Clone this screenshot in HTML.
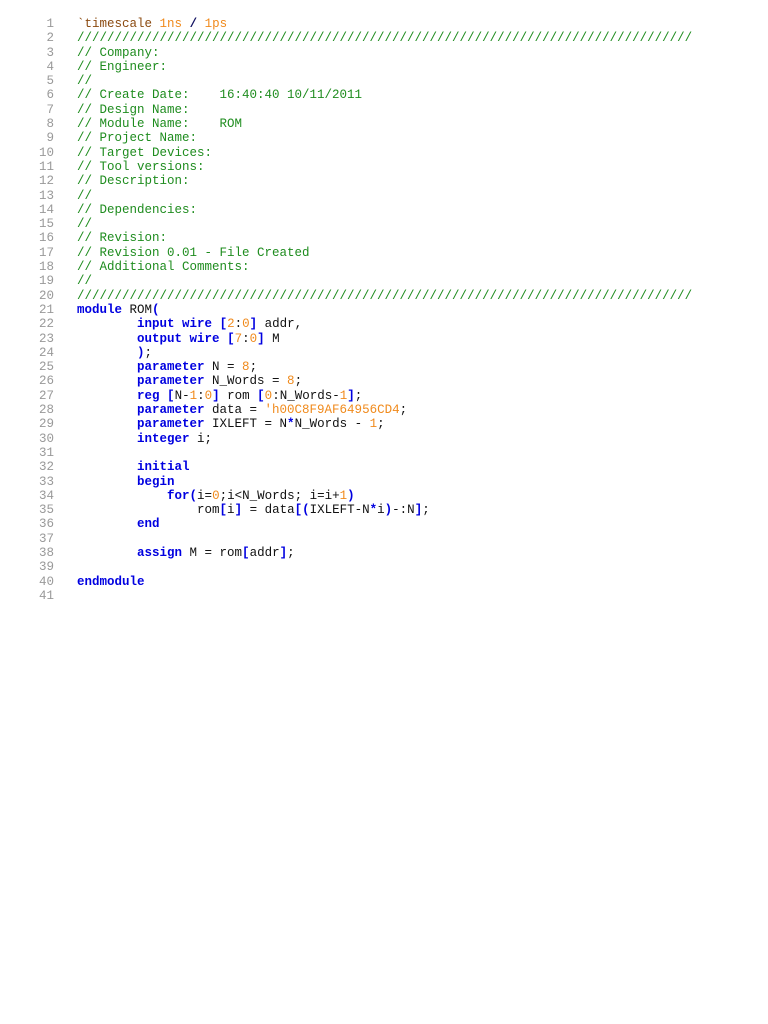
<!DOCTYPE html>
<html><head><meta charset="utf-8"><style>
body{margin:0;background:#fff;width:768px;height:1024px;overflow:hidden}
.c{position:absolute;top:17px;left:77px;font-family:"Liberation Mono",monospace;font-size:12.5px;line-height:14.3px;white-space:pre;color:#111}
.n{position:absolute;top:17px;left:20px;width:34px;text-align:right;font-family:"Liberation Mono",monospace;font-size:12.5px;line-height:14.3px;white-space:pre;color:#999}
.g{color:#1e8c1e}.k{color:#0000e0;font-weight:bold}.o{color:#f08a1c}.b{color:#0000e0;font-weight:bold}.t{color:#8b4a10}.d{color:#101060;font-weight:bold}
</style></head><body>
<div class="n">1
2
3
4
5
6
7
8
9
10
11
12
13
14
15
16
17
18
19
20
21
22
23
24
25
26
27
28
29
30
31
32
33
34
35
36
37
38
39
40
41</div>
<div class="c"><span class="t">`timescale</span> <span class="o">1ns</span> <span class="d">/</span> <span class="o">1ps</span>
<span class="g">//////////////////////////////////////////////////////////////////////////////////</span>
<span class="g">// Company:</span>
<span class="g">// Engineer:</span>
<span class="g">//</span>
<span class="g">// Create Date:    16:40:40 10/11/2011</span>
<span class="g">// Design Name:</span>
<span class="g">// Module Name:    ROM</span>
<span class="g">// Project Name:</span>
<span class="g">// Target Devices:</span>
<span class="g">// Tool versions:</span>
<span class="g">// Description:</span>
<span class="g">//</span>
<span class="g">// Dependencies:</span>
<span class="g">//</span>
<span class="g">// Revision:</span>
<span class="g">// Revision 0.01 - File Created</span>
<span class="g">// Additional Comments:</span>
<span class="g">//</span>
<span class="g">//////////////////////////////////////////////////////////////////////////////////</span>
<span class="k">module</span> ROM<span class="b">(</span>
        <span class="k">input</span> <span class="k">wire</span> <span class="b">[</span><span class="o">2</span>:<span class="o">0</span><span class="b">]</span> addr,
        <span class="k">output</span> <span class="k">wire</span> <span class="b">[</span><span class="o">7</span>:<span class="o">0</span><span class="b">]</span> M
        <span class="b">)</span>;
        <span class="k">parameter</span> N = <span class="o">8</span>;
        <span class="k">parameter</span> N_Words = <span class="o">8</span>;
        <span class="k">reg</span> <span class="b">[</span>N-<span class="o">1</span>:<span class="o">0</span><span class="b">]</span> rom <span class="b">[</span><span class="o">0</span>:N_Words-<span class="o">1</span><span class="b">]</span>;
        <span class="k">parameter</span> data = <span class="o">'h00C8F9AF64956CD4</span>;
        <span class="k">parameter</span> IXLEFT = N<span class="b">*</span>N_Words - <span class="o">1</span>;
        <span class="k">integer</span> i;

        <span class="k">initial</span>
        <span class="k">begin</span>
            <span class="k">for</span><span class="b">(</span>i=<span class="o">0</span>;i&lt;N_Words; i=i+<span class="o">1</span><span class="b">)</span>
                rom<span class="b">[</span>i<span class="b">]</span> = data<span class="b">[(</span>IXLEFT-N<span class="b">*</span>i<span class="b">)</span>-:N<span class="b">]</span>;
        <span class="k">end</span>

        <span class="k">assign</span> M = rom<span class="b">[</span>addr<span class="b">]</span>;

<span class="k">endmodule</span>
</div>
</body></html>
